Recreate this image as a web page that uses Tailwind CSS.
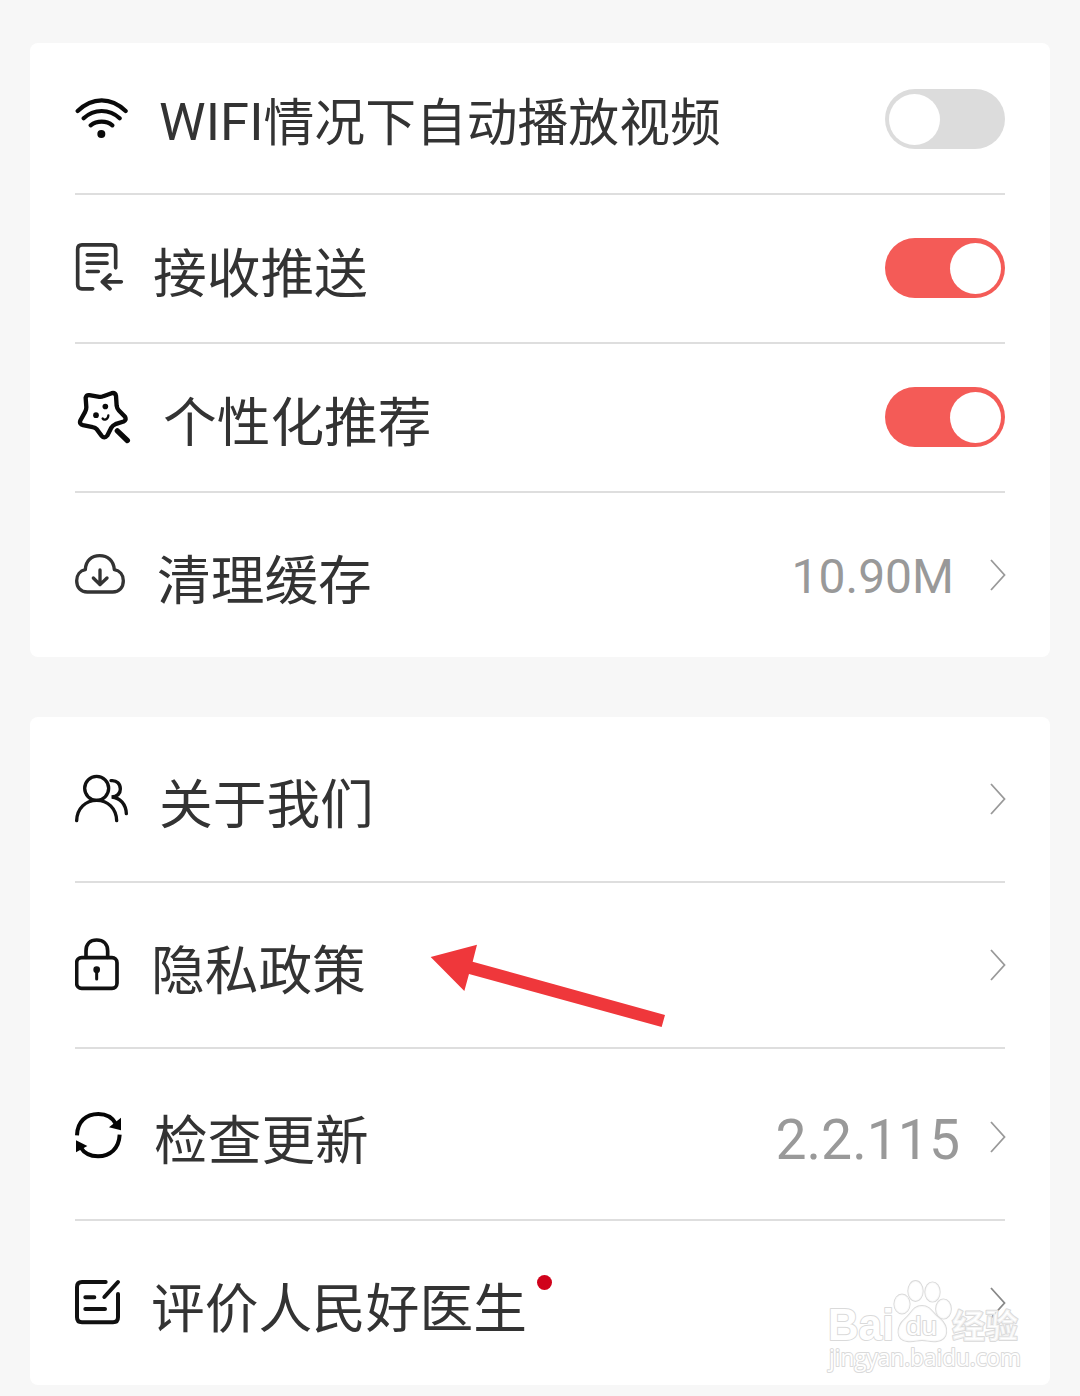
<!DOCTYPE html>
<html lang="zh-CN">
  <head>
    <meta charset="UTF-8" />
    <meta name="viewport" content="width=device-width, initial-scale=1.0" />
    <title>设置</title>
    <script src="https://cdn.jsdelivr.net/npm/@tailwindcss/browser@4"></script>
  </head>
  <body
    class="relative h-[1396px] overflow-hidden bg-[#f7f7f7] px-[30px] pt-[43px] font-['Roboto','Noto_Sans_CJK_SC',sans-serif] text-[53.7px] leading-none text-[#333]"
  >
    <!-- General settings -->
    <section class="rounded-lg bg-white px-[45px]">
      <div class="flex h-[152px] items-center border-b-2 border-[#dedede]">
        <svg class="h-14 w-14 shrink-0" viewBox="45 30 168 168" fill="none" stroke="#0a0a0a" stroke-width="12.5" stroke-linecap="round">
          <path d="M53 93Q86 61 125 61T197 93M71 115Q94 93 125 93T179 115M92 136Q106 125 125 125T157 136" />
          <circle cx="124" cy="162" r="12" fill="#0a0a0a" stroke="none" />
        </svg>
        <span class="mt-[11px] ml-[28px] text-[50.8px] whitespace-nowrap"><span class="relative -top-px text-[52.5px] tracking-[0.1px]">WIFI</span>情况下自动播放视频</span>
        <div class="mt-0.5 ml-auto flex h-[60px] w-[120px] items-center rounded-full bg-[#dcdcdc] px-1">
          <div class="h-[51px] w-[51px] rounded-full bg-white"></div>
        </div>
      </div>

      <div class="flex h-[149px] items-center border-b-2 border-[#dedede]">
        <svg class="h-14 w-14 shrink-0" viewBox="45 31.5 168 168" fill="none" stroke="#333" stroke-width="11" stroke-linecap="round" stroke-linejoin="round">
          <path d="M98 175H66Q53 175 53 162V56Q53 43 66 43H154Q167 43 167 56V112M82 73H141M82 98H141M82 123H115M184 154H128M150 133L127 154L150 175" />
        </svg>
        <span class="mt-[12px] ml-[22px]">接收推送</span>
        <div class="-mt-px ml-auto flex h-[60px] w-[120px] items-center justify-end rounded-full bg-[#f45b57] px-[4.5px]">
          <div class="h-[51px] w-[51px] rounded-full bg-white"></div>
        </div>
      </div>

      <div class="flex h-[149px] items-center border-b-2 border-[#dedede]">
        <svg class="h-14 w-14 shrink-0" viewBox="45 28.5 168 168" fill="none" stroke="#0a0a0a" stroke-width="13" stroke-linecap="round" stroke-linejoin="round">
          <path d="M88 44L118 49Q124 50 130 47L155 38Q166 36 168 46L170 76Q171 84 176 89L195 109Q200 119 191 123L166 131Q158 134 153 143L142 165Q133 176 125 166L110 146Q106 141 98 140L69 134Q57 131 61 120L75 95Q79 88 79 80L77 52Q79 43 88 44Z" />
          <path d="M172 151L202 180" stroke-width="16" />
          <path d="M145 105C144 118 132 120 128 114" stroke-width="7" />
          <circle cx="136" cy="78" r="8.5" fill="#0a0a0a" stroke="none" />
          <circle cx="108" cy="104" r="8.5" fill="#0a0a0a" stroke="none" />
        </svg>
        <span class="mt-[12px] ml-[32px]">个性化推荐</span>
        <div class="-mt-px ml-auto flex h-[60px] w-[120px] items-center justify-end rounded-full bg-[#f45b57] px-[4.5px]">
          <div class="h-[51px] w-[51px] rounded-full bg-white"></div>
        </div>
      </div>

      <div class="flex h-[164px] items-center">
        <svg class="h-14 w-14 shrink-0" viewBox="45 21 168 168" fill="none" stroke="#333" stroke-width="10" stroke-linecap="round" stroke-linejoin="round">
          <path d="M82 156C62 156 50 142 50 122C50 105 60 92 76 89C77 62 95 47 119 47C143 47 161 62 163 89C179 92 190 105 190 122C190 142 178 156 158 156Z" />
          <path d="M120 90V134M100 114L120 134L141 114" />
        </svg>
        <span class="mt-[13px] ml-[26px]">清理缓存</span>
        <span class="mt-1 mr-[36px] ml-auto text-[48px] text-[#999]">10.90M</span>
        <svg class="-mr-px h-8 w-4 shrink-0" viewBox="0 0 16 32" fill="none" stroke="#999" stroke-width="1.8">
          <path d="M1 1L14.5 16L1 31" />
        </svg>
      </div>
    </section>

    <!-- About -->
    <section class="mt-[60px] rounded-lg bg-white px-[45px]">
      <div class="flex h-[166px] items-center border-b-2 border-[#dedede]">
        <svg class="h-14 w-14 shrink-0" viewBox="45 33 168 168" fill="none" stroke="#111" stroke-width="10" stroke-linecap="round">
          <circle cx="110" cy="85" r="36" />
          <path d="M50 182C51 145 77 121 110 121S169 145 170 182M153 62C171 60 181 72 181 87C181 101 173 109 155 111C181 113 198 134 199 161" />
        </svg>
        <span class="mt-[13px] ml-[28px]">关于我们</span>
        <svg class="-mr-px ml-auto h-8 w-4 shrink-0" viewBox="0 0 16 32" fill="none" stroke="#999" stroke-width="1.8">
          <path d="M1 1L14.5 16L1 31" />
        </svg>
      </div>

      <div class="flex h-[166px] items-center border-b-2 border-[#dedede]">
        <svg class="h-14 w-14 shrink-0" viewBox="45 36 168 168" fill="none" stroke="#111" stroke-width="11" stroke-linecap="round">
          <rect x="50" y="98" width="121" height="92" rx="15" />
          <path d="M78 97V78C78 56 91 45 110 45S143 56 143 78V97" />
          <path d="M110 134V162" stroke-width="9" />
          <circle cx="110" cy="134" r="10" fill="#111" stroke="none" />
        </svg>
        <span class="mt-[13px] ml-[20px]">隐私政策</span>
        <svg class="-mr-px ml-auto h-8 w-4 shrink-0" viewBox="0 0 16 32" fill="none" stroke="#999" stroke-width="1.8">
          <path d="M1 1L14.5 16L1 31" />
        </svg>
      </div>

      <div class="flex h-[172px] items-center border-b-2 border-[#dedede]">
        <svg class="h-14 w-14 shrink-0" viewBox="45 33 168 168" fill="none" stroke="#050505" stroke-width="12">
          <path d="M51 121C52 80 78 57 115 57C140 57 158 68 168 87M179 119C177 160 151 184 114 184C91 184 72 174 61 156" />
          <path d="M183 68V106L147 97ZM48 136L82 153L48 172Z" fill="#050505" stroke="none" />
        </svg>
        <span class="mt-4 ml-[23px]">检查更新</span>
        <span class="mt-[13px] mr-[30px] ml-auto text-[55.3px] text-[#999]">2.2.115</span>
        <svg class="mt-1.5 -mr-px h-8 w-4 shrink-0" viewBox="0 0 16 32" fill="none" stroke="#999" stroke-width="1.8">
          <path d="M1 1L14.5 16L1 31" />
        </svg>
      </div>

      <div class="flex h-[164px] items-center">
        <svg class="h-14 w-14 shrink-0" viewBox="45 30 168 168" fill="none" stroke="#111" stroke-width="12" stroke-linecap="round">
          <path d="M137 51H66Q51 51 51 66V157Q51 172 66 172H159Q174 172 174 157V87M76 97H103M76 132H135M133 96L174 51" />
        </svg>
        <span class="relative mt-[13px] ml-[20px]">
          评价人民好医生
          <i class="absolute -top-2 -right-[25px] h-[15px] w-[15px] rounded-full bg-[#d0021b]"></i>
        </span>
        <svg class="-mr-px ml-auto h-8 w-4 shrink-0" viewBox="0 0 16 32" fill="none" stroke="#888" stroke-width="1.8">
          <path d="M1 1L14.5 16L1 31" />
        </svg>
      </div>
    </section>

    <!-- Pointer to the privacy policy row -->
    <svg class="absolute top-[920px] left-[410px] h-[130px] w-[280px]" viewBox="0 0 840 390" fill="#ef373b">
      <path d="M62 111L201 74L188 125L765 285L755 321L177 162L163 213Z" />
    </svg>

    <!-- Watermark -->
    <svg
      class="absolute top-[1260px] left-[800px] h-[136px] w-[280px] [paint-order:stroke]"
      viewBox="0 0 280 136"
      fill="#ffffff"
      stroke="#dadada"
      stroke-width="2"
      stroke-linejoin="round"
      font-family="'Liberation Sans', 'Noto Sans CJK SC', sans-serif"
    >
      <text x="28" y="80" font-size="44" font-weight="700" textLength="66" lengthAdjust="spacingAndGlyphs">Bai</text>
      <g stroke-width="1.8" fill-opacity="0.8">
        <ellipse cx="102" cy="44" rx="7.7" ry="9.5" />
        <ellipse cx="115.5" cy="31" rx="7.3" ry="10" />
        <ellipse cx="132.5" cy="32" rx="7.3" ry="9.7" />
        <ellipse cx="143.5" cy="49" rx="7.5" ry="9.7" />
        <path d="M122 46C131 46 132 53 139 58C150 67 148 80 137 81C131 82 127 80 122 80S113 82 107 81C96 80 96 67 105 59C112 53 113 46 122 46Z" />
      </g>
      <text x="106" y="75" font-size="25" textLength="31" lengthAdjust="spacingAndGlyphs">du</text>
      <text x="152" y="78" font-size="33" font-weight="700" fill-opacity="0.7">经验</text>
      <text x="29" y="106" font-size="23" font-family="'Open Sans', sans-serif" textLength="192" lengthAdjust="spacingAndGlyphs">jingyan.baidu.com</text>
    </svg>
  </body>
</html>
